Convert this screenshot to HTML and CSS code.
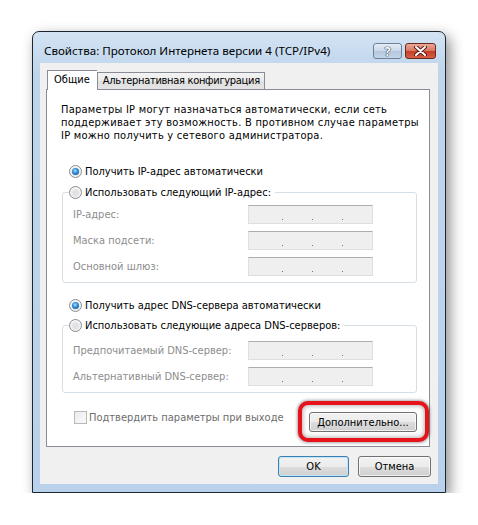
FILE: index.html
```html
<!DOCTYPE html>
<html lang="ru">
<head>
    <meta charset="UTF-8">
    <title>Свойства: Протокол Интернета версии 4 (TCP/IPv4)</title>
    <link rel="stylesheet" href="styles.css">
</head>
<body>
<div class="window">
    <div class="titlebar">
        <span class="title">Свойства: Протокол Интернета версии 4 (TCP/IPv4)</span>
        <span class="cap-btn help">?</span>
        <span class="cap-btn close">
            <svg width="13" height="10" viewBox="0 0 13 10">
                <path d="M2 1 L11 9 M11 1 L2 9" stroke="#5a1a10" stroke-width="4" stroke-linecap="round"/>
                <path d="M2 1 L11 9 M11 1 L2 9" stroke="#fff" stroke-width="2" stroke-linecap="round"/>
            </svg>
        </span>
    </div>
    <div class="client">
        <div class="tabs">
            <span class="tab active">Общие</span>
            <span class="tab alt">Альтернативная конфигурация</span>
        </div>
        <div class="panel">
            <p class="intro">Параметры IP могут назначаться автоматически, если сеть<br>поддерживает эту возможность. В противном случае параметры<br>IP можно получить у сетевого администратора.</p>

            <div class="radio-row first"><span class="radio checked"></span>Получить IP-адрес автоматически</div>
            <div class="group ip-group">
                <div class="radio-row legend"><span class="radio"></span>Использовать следующий IP-адрес:</div>
                <div class="field"><span class="label">IP-адрес:</span><span class="ip"><i></i><i></i><i></i></span></div>
                <div class="field"><span class="label">Маска подсети:</span><span class="ip"><i></i><i></i><i></i></span></div>
                <div class="field"><span class="label">Основной шлюз:</span><span class="ip"><i></i><i></i><i></i></span></div>
            </div>

            <div class="radio-row dns-first"><span class="radio checked"></span>Получить адрес DNS-сервера автоматически</div>
            <div class="group dns-group">
                <div class="radio-row legend"><span class="radio"></span>Использовать следующие адреса DNS-серверов:</div>
                <div class="field"><span class="label">Предпочитаемый DNS-сервер:</span><span class="ip"><i></i><i></i><i></i></span></div>
                <div class="field"><span class="label">Альтернативный DNS-сервер:</span><span class="ip"><i></i><i></i><i></i></span></div>
            </div>

            <div class="footer-row">
                <span class="check"><span class="checkbox"></span>Подтвердить параметры при выходе</span>
                <span class="marked">
                    <span class="highlight"></span>
                    <span class="btn advanced">Дополнительно...</span>
                </span>
            </div>
        </div>
        <div class="dialog-buttons">
            <span class="btn default">OK</span>
            <span class="btn cancel">Отмена</span>
        </div>
    </div>
</div>
</body>
</html>
```
FILE: styles.css
```css
*{
    margin: 0;
    padding: 0;
    box-sizing: border-box;
}
body{
    background: #fff;
    font-family: "DejaVu Sans Condensed", "DejaVu Sans", sans-serif;
    font-stretch: condensed;
    font-size: 11px;
    color: #000;
}
.window{
    width: 414px;
    height: 462px;
    margin: 31px 0 0 32px;
    border: 1px solid #1c2630;
    border-radius: 7px 7px 0 0;
    background: linear-gradient(#d3e3f3, #bfd5ec 40px, #b9d1ea);
    box-shadow: 4px 5px 14px rgba(0, 0, 0, 0.45);
}
.titlebar{
    height: 31px;
    display: flex;
    align-items: flex-start;
    padding: 11px 9px 0 11px;
}
.title{
    flex: 1;
    font-family: "Noto Sans", sans-serif;
    font-stretch: normal;
    font-size: 11.6px;
    line-height: 15px;
    color: #000;
}
.cap-btn{
    height: 16px;
    border-radius: 3px;
    display: flex;
    align-items: center;
    justify-content: center;
}
.help{
    width: 29px;
    margin-right: 3px;
    border: 1px solid #6f8196;
    background: linear-gradient(#e3ecf6, #c9d8e9 50%, #b4c7dc 51%, #c2d5e9);
    color: #fff;
    font-family: "Noto Sans", sans-serif;
    font-weight: bold;
    font-size: 12px;
    text-shadow: 0 0 1px #2d3c4f, 0 0 1px #2d3c4f, 0 0 1px #2d3c4f;
}
.close{
    width: 31px;
    border: 1px solid #6a2a1f;
    background: linear-gradient(#eba898, #d9765d 50%, #c53d25 51%, #d65f47);
}
.client{
    height: 421px;
    margin: 0 7px;
    background: #f0f0f0;
    padding: 7px 8px 0 6px;
}
.tabs{
    height: 19px;
    display: flex;
    align-items: flex-start;
    margin-left: 1px;
    position: relative;
    z-index: 1;
}
.tab{
    height: 17px;
    margin-top: 2px;
    padding: 0 4px 0 5px;
    border: 1px solid #898c95;
    border-bottom: 0;
    background: linear-gradient(#f3f3f3, #ebebeb 50%, #dedede 51%, #e5e5e5);
    line-height: 15px;
}
.tab.alt{
    letter-spacing: -0.3px;
}
.tab.active{
    height: 20px;
    margin-top: 0;
    padding: 0 7px 0 6px;
    border-right: 0;
    background: #fff;
    line-height: 18px;
}
.panel{
    height: 358px;
    border: 1px solid #898c95;
    background: #fff;
    padding: 13px 12px 0 14px;
}
.intro{
    line-height: 13px;
    letter-spacing: 0.25px;
    white-space: nowrap;
}
.radio-row{
    height: 16px;
    display: flex;
    align-items: center;
    gap: 3px;
    margin-left: 8px;
}
.radio-row.first{
    margin-top: 21px;
}
.radio-row.dns-first{
    margin-top: 14px;
}
.radio{
    width: 13px;
    height: 13px;
    border-radius: 50%;
    border: 1px solid #878c93;
    background: radial-gradient(circle at 50% 55%, #e2e2e2 30%, #f8f8f8 70%);
    display: flex;
    align-items: center;
    justify-content: center;
}
.radio.checked::after{
    content: "";
    width: 7px;
    height: 7px;
    border-radius: 50%;
    background: radial-gradient(circle at 45% 40%, #a9e2ff, #2d8ad9 45%, #174d87 90%);
}
.group{
    margin-left: 1px;
    border: 1px solid #d5dfe5;
    border-radius: 3px;
    padding: 0 0 6px 10px;
}
.ip-group{
    margin-top: 13px;
}
.dns-group{
    margin-top: 12px;
}
.group .legend{
    width: max-content;
    margin: -9px 0 0 -4px;
    padding-right: 4px;
    background: #fff;
}
.field{
    height: 19px;
    display: flex;
    align-items: center;
    margin-top: 7px;
    color: #8d8d8d;
}
.ip-group .legend + .field{
    margin-top: 5px;
}
.dns-group .legend + .field{
    margin-top: 8px;
}
.label{
    width: 175px;
}
.ip{
    width: 125px;
    height: 19px;
    border: 1px solid #dcdfe3;
    border-top-color: #abadb3;
    background: #efefef;
    display: flex;
    padding: 0 0 3px 33px;
    align-items: flex-end;
    gap: 29px;
}
.ip i{
    width: 1px;
    height: 1px;
    background: #5f7d90;
}
.footer-row{
    margin-top: 19px;
    display: flex;
    justify-content: space-between;
    align-items: flex-start;
}
.check{
    display: flex;
    align-items: center;
    height: 16px;
    margin: -3px 0 0 13px;
    gap: 2px;
    color: #6d6d6d;
}
.checkbox{
    width: 13px;
    height: 13px;
    border: 1px solid #b9b9b9;
    background: linear-gradient(135deg, #ececec, #f9f9f9);
}
.marked{
    position: relative;
}
.highlight{
    position: absolute;
    top: -11px;
    left: -11px;
    right: -12px;
    bottom: -10px;
    border: 4px solid #e8121b;
    border-radius: 10px;
    background: #fff;
    box-shadow: 0 0 3px 1px rgba(0, 0, 0, 0.35), inset 0 0 4px 1px rgba(0, 0, 0, 0.3);
}
.btn{
    height: 21px;
    display: flex;
    align-items: center;
    justify-content: center;
    border: 1px solid #707070;
    border-radius: 3px;
    background: linear-gradient(#f2f2f2, #ebebeb 50%, #dddddd 51%, #cfcfcf);
    box-shadow: inset 0 0 0 1px rgba(255, 255, 255, 0.7);
}
.btn.advanced{
    position: relative;
    width: 108px;
    height: 20px;
}
.dialog-buttons{
    display: flex;
    justify-content: flex-end;
    margin-top: 9px;
    margin-right: -1px;
    gap: 9px;
}
.btn.default{
    width: 71px;
    border-color: #3c7fb1;
    box-shadow: inset 0 0 0 1px #bfe6f9;
}
.btn.cancel{
    width: 73px;
}
```
